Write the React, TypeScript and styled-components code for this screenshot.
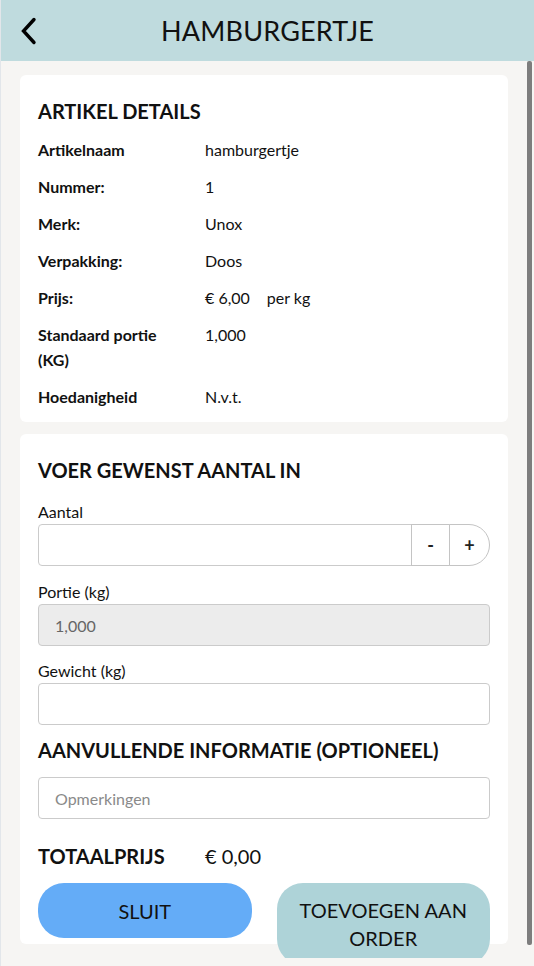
import React from "react";
import styled, { createGlobalStyle } from "styled-components";

const Global = createGlobalStyle`
  html, body { margin: 0; padding: 0; height: 100%; }
  body {
    font-family: Lato, "Open Sans", sans-serif;
    color: #111;
    background: #f6f5f3;
  }
  * { box-sizing: border-box; }
`;

const Screen = styled.div`
  height: 966px;
  display: flex;
  flex-direction: column;
  background: #f6f5f3;
  border-left: 1px solid #e2e6ea;
  overflow: hidden;
`;

const Header = styled.header`
  flex: 0 0 61px;
  background: #bfdbde;
  display: flex;
  align-items: center;
  justify-content: center;
  position: relative;
`;

const BackButton = styled.button`
  position: absolute;
  left: 15px;
  top: 16px;
  width: 24px;
  height: 30px;
  border: 0;
  background: none;
  padding: 0;
  display: flex;
  align-items: center;
  justify-content: center;
  cursor: pointer;
`;

const Title = styled.h1`
  margin: 0;
  font-size: 27px;
  font-weight: 400;
  color: #111;
  letter-spacing: 0.2px;
`;

const Viewport = styled.div`
  flex: 0 0 897px;
  position: relative;
  overflow: hidden;
`;

const Scroll = styled.main`
  height: 100%;
  overflow: hidden;
  padding: 14px 26px 0 19px;
  display: flex;
  flex-direction: column;
  gap: 12px;
`;

const ScrollThumb = styled.div`
  position: absolute;
  top: 0;
  right: 2px;
  width: 5px;
  height: 884px;
  background: #7d7d7d;
  border-radius: 2px;
`;

const Card = styled.section<{ $bottom: number }>`
  flex: 0 0 auto;
  background: #fff;
  border-radius: 6px;
  padding: 18px 18px ${(p) => p.$bottom}px;
  display: flex;
  flex-direction: column;
`;

const Heading = styled.h2<{ $mt?: number; $mb?: number }>`
  margin: ${(p) => p.$mt ?? 0}px 0 ${(p) => p.$mb ?? 0}px;
  font-size: 20px;
  line-height: 36px;
  font-weight: 700;
  color: #111;
`;

const DetailGrid = styled.dl`
  margin: 0;
  display: grid;
  grid-template-columns: 142px 1fr;
  column-gap: 25px;
  row-gap: 12px;
  font-size: 16px;
  line-height: 25px;
`;

const Term = styled.dt`
  font-weight: 700;
`;

const Value = styled.dd`
  margin: 0;
  display: flex;
  gap: 17px;
`;

const Label = styled.label<{ $mt?: number }>`
  display: block;
  font-size: 16px;
  line-height: 24px;
  margin-top: ${(p) => p.$mt ?? 0}px;
`;

const TextInput = styled.input`
  width: 100%;
  height: 42px;
  border: 1px solid #cbcbcb;
  border-radius: 4px;
  padding: 0 16px;
  font-family: inherit;
  font-size: 16px;
  color: #222;
  background: #fff;
  outline: none;
  &::placeholder { color: #8a8a8a; }
  &:disabled { background: #ececec; color: #666; }
`;

const Stepper = styled.div`
  display: flex;
  height: 42px;
`;

const StepInput = styled(TextInput)`
  flex: 1;
  border-radius: 4px 0 0 4px;
`;

const StepButton = styled.button<{ $round?: boolean }>`
  width: ${(p) => (p.$round ? 41 : 39)}px;
  height: 42px;
  border: 1px solid #c4c4c4;
  margin-left: -1px;
  background: #fff;
  border-radius: ${(p) => (p.$round ? "0 21px 21px 0" : "0")};
  font-family: inherit;
  font-size: 18px;
  font-weight: 700;
  color: #222;
  padding: 0;
  cursor: pointer;
`;

const TotalRow = styled.div`
  margin-top: 19px;
  display: grid;
  grid-template-columns: 167px 1fr;
  align-items: center;
  line-height: 36px;
`;

const TotalLabel = styled.span`
  font-size: 20px;
  font-weight: 700;
`;

const TotalValue = styled.span`
  font-size: 20px;
`;

const ButtonRow = styled.div`
  margin-top: 9px;
  height: 55px;
  display: flex;
  align-items: flex-start;
  gap: 25px;
`;

const ActionButton = styled.button<{ $bg: string }>`
  flex: 1;
  min-height: 55px;
  padding: 13px 16px;
  border: 0;
  border-radius: 26px;
  background: ${(p) => p.$bg};
  font-family: inherit;
  font-size: 20px;
  line-height: 28px;
  color: #111;
  cursor: pointer;
`;

const BottomStrip = styled.div`
  flex: 1 0 auto;
  background: #f6f5f3;
`;

const details: [string, React.ReactNode][] = [
  ["Artikelnaam", "hamburgertje"],
  ["Nummer:", "1"],
  ["Merk:", "Unox"],
  ["Verpakking:", "Doos"],
  ["Prijs:", <><span>€ 6,00</span><span>per kg</span></>],
  ["Standaard portie (KG)", "1,000"],
  ["Hoedanigheid", "N.v.t."],
];

export default function App() {
  return (
    <>
      <Global />
      <Screen>
        <Header>
          <BackButton aria-label="Terug">
            <svg width="18" height="28" viewBox="0 0 18 28">
              <polyline
                points="15,2.5 4.5,14 15,25.5"
                fill="none"
                stroke="#000"
                strokeWidth="3.4"
                strokeLinecap="round"
                strokeLinejoin="miter"
              />
            </svg>
          </BackButton>
          <Title>HAMBURGERTJE</Title>
        </Header>
        <Viewport>
          <Scroll>
            <Card $bottom={13}>
              <Heading $mb={8}>ARTIKEL DETAILS</Heading>
              <DetailGrid>
                {details.map(([k, v]) => (
                  <React.Fragment key={k}>
                    <Term>{k}</Term>
                    <Value>{v}</Value>
                  </React.Fragment>
                ))}
              </DetailGrid>
            </Card>
            <Card $bottom={6}>
              <Heading>VOER GEWENST AANTAL IN</Heading>
              <Label $mt={12}>Aantal</Label>
              <Stepper>
                <StepInput type="text" />
                <StepButton>-</StepButton>
                <StepButton $round>+</StepButton>
              </Stepper>
              <Label $mt={14}>Portie (kg)</Label>
              <TextInput type="text" value="1,000" disabled readOnly />
              <Label $mt={13}>Gewicht (kg)</Label>
              <TextInput type="text" />
              <Heading $mt={7} $mb={9}>AANVULLENDE INFORMATIE (OPTIONEEL)</Heading>
              <TextInput type="text" placeholder="Opmerkingen" />
              <TotalRow>
                <TotalLabel>TOTAALPRIJS</TotalLabel>
                <TotalValue>€ 0,00</TotalValue>
              </TotalRow>
              <ButtonRow>
                <ActionButton $bg="#64acf7">SLUIT</ActionButton>
                <ActionButton $bg="#aed3d8">TOEVOEGEN AAN ORDER</ActionButton>
              </ButtonRow>
            </Card>
          </Scroll>
          <ScrollThumb />
        </Viewport>
        <BottomStrip />
      </Screen>
    </>
  );
}
